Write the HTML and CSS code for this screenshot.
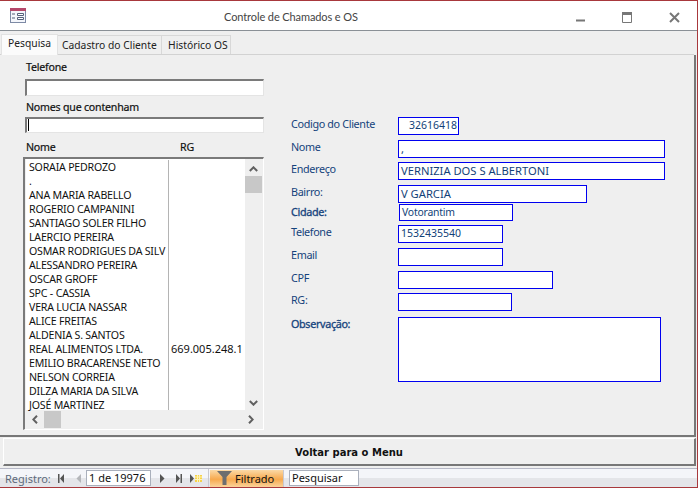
FILE: index.html
```html
<!DOCTYPE html>
<html lang="pt">
<head>
<meta charset="utf-8">
<title>Controle de Chamados e OS</title>
<link rel="stylesheet" href="styles.css">
</head>
<body>
<div class="window">
  <header class="titlebar">
    <svg class="app-icon" width="16" height="15" viewBox="0 0 16 15">
      <rect x="0.5" y="0.5" width="15" height="14" fill="#f4f6fb" stroke="#7d8aa5"/>
      <rect x="0" y="0" width="16" height="3" fill="#b5476a"/>
      <path d="M2 6h3M2 10h3" stroke="#55617a"/>
      <path d="M7.500 5.500h6v2h-6zM7.500 9.500h6v2h-6z" fill="#fff" stroke="#55617a"/>
    </svg>
    <div class="title">Controle de Chamados e OS</div>
    <div class="controls">
      <svg class="min-icon" width="10" height="3" viewBox="0 0 10 3"><rect width="9" height="2" y="0.500" fill="#777"/></svg>
      <svg width="11" height="11" viewBox="0 0 11 11"><path d="M.5 1.500h9v9h-9z" fill="none" stroke="#777"/><rect x="0" y="0" width="10" height="3" fill="#777"/></svg>
      <svg width="11" height="11" viewBox="0 0 11 11"><path d="M1 1l9 9M10 1l-9 9" stroke="#777" stroke-width="2"/></svg>
    </div>
  </header>

  <nav class="tabs">
    <div class="tab active">Pesquisa</div>
    <div class="tab tab-cad">Cadastro do Cliente</div>
    <div class="tab tab-hist">Histórico OS</div>
  </nav>

  <main class="page">
    <section class="search">
      <div class="s-label">Telefone</div>
      <div class="s-input tall"></div>
      <div class="s-label second">Nomes que contenham</div>
      <div class="s-input"><span class="caret"></span></div>
      <div class="list-head"><span class="col-name">Nome</span><span>RG</span></div>
      <div class="listbox">
        <div class="list-main">
          <div class="rows">
            <div class="row"><span class="c1">SORAIA PEDROZO</span><span class="c2"></span></div>
            <div class="row"><span class="c1">.</span><span class="c2"></span></div>
            <div class="row"><span class="c1">ANA MARIA RABELLO</span><span class="c2"></span></div>
            <div class="row"><span class="c1">ROGERIO CAMPANINI</span><span class="c2"></span></div>
            <div class="row"><span class="c1">SANTIAGO SOLER FILHO</span><span class="c2"></span></div>
            <div class="row"><span class="c1">LAERCIO PEREIRA</span><span class="c2"></span></div>
            <div class="row"><span class="c1">OSMAR RODRIGUES DA SILV</span><span class="c2"></span></div>
            <div class="row"><span class="c1">ALESSANDRO PEREIRA</span><span class="c2"></span></div>
            <div class="row"><span class="c1">OSCAR GROFF</span><span class="c2"></span></div>
            <div class="row"><span class="c1">SPC - CASSIA</span><span class="c2"></span></div>
            <div class="row"><span class="c1">VERA LUCIA NASSAR</span><span class="c2"></span></div>
            <div class="row"><span class="c1">ALICE FREITAS</span><span class="c2"></span></div>
            <div class="row"><span class="c1">ALDENIA S. SANTOS</span><span class="c2"></span></div>
            <div class="row"><span class="c1">REAL ALIMENTOS LTDA.</span><span class="c2">669.005.248.1</span></div>
            <div class="row"><span class="c1">EMILIO BRACARENSE NETO</span><span class="c2"></span></div>
            <div class="row"><span class="c1">NELSON CORREIA</span><span class="c2"></span></div>
            <div class="row"><span class="c1">DILZA MARIA DA SILVA</span><span class="c2"></span></div>
            <div class="row last"><span class="c1">JOSÉ MARTINEZ</span><span class="c2"></span></div>
          </div>
          <div class="vscroll">
            <svg width="9" height="6" viewBox="0 0 9 6"><path d="M.8 5L4.500 1.300 8.200 5" fill="none" stroke="#606060" stroke-width="2"/></svg>
            <div class="vthumb"></div>
            <svg class="down" width="9" height="6" viewBox="0 0 9 6"><path d="M.8 1L4.500 4.700 8.200 1" fill="none" stroke="#606060" stroke-width="2"/></svg>
          </div>
        </div>
        <div class="hscroll">
          <svg width="6" height="9" viewBox="0 0 6 9"><path d="M5 .8L1.300 4.500 5 8.200" fill="none" stroke="#606060" stroke-width="2"/></svg>
          <div class="hthumb"></div>
          <svg class="right" width="6" height="9" viewBox="0 0 6 9"><path d="M1 .8L4.700 4.500 1 8.200" fill="none" stroke="#606060" stroke-width="2"/></svg>
        </div>
      </div>
    </section>

    <section class="details">
      <label class="f-label">Codigo do Cliente</label><div class="f-input w-codigo num">32616418</div>
      <label class="f-label">Nome</label><div class="f-input w-full low">,</div>
      <label class="f-label">Endereço</label><div class="f-input w-full">VERNIZIA DOS S ALBERTONI</div>
      <label class="f-label">Bairro:</label><div class="f-input w-bairro">V GARCIA</div>
      <label class="f-label strong">Cidade:</label><div class="f-input w-cidade">Votorantim</div>
      <label class="f-label">Telefone</label><div class="f-input w-tel digits">1532435540</div>
      <label class="f-label">Email</label><div class="f-input w-tel"></div>
      <label class="f-label">CPF</label><div class="f-input w-cpf"></div>
      <label class="f-label">RG:</label><div class="f-input w-rg"></div>
      <label class="f-label strong obs-label">Observação:</label><div class="f-input w-obs"></div>
    </section>
  </main>

  <div class="menu-btn">Voltar para o Menu</div>

  <footer class="statusbar">
    <span class="reg">Registro:</span>
    <div class="nav-group">
      <svg width="6" height="9" viewBox="0 0 6 9"><path d="M0 0h1.500v9H0zM6 0v9L2 4.500z" fill="#555"/></svg>
      <svg class="nav-prev" width="5" height="9" viewBox="0 0 5 9"><path d="M5 0v9L.5 4.500z" fill="#b4b6ba"/></svg>
    </div>
    <div class="rec">1 de 19976</div>
    <div class="nav-group after">
      <svg width="5" height="9" viewBox="0 0 5 9"><path d="M0 0v9l4.500-4.500z" fill="#555"/></svg>
      <svg class="nav-last" width="6" height="9" viewBox="0 0 6 9"><path d="M0 0v9l4-4.500zM4.500 0H6v9H4.500z" fill="#555"/></svg>
      <svg class="nav-new" width="12" height="9" viewBox="0 0 12 9"><path d="M0 0v9l4-4.500z" fill="#555"/><rect x="5" y="1" width="7" height="7" fill="#f6d24a"/><path d="M5 3h7M5 5.500h7M7.500 1v7M9.500 1v7" stroke="#fff3b8"/></svg>
    </div>
    <div class="filter">
      <svg width="15" height="14" viewBox="0 0 15 14"><path d="M0 0h15L9.500 6v8h-4V6z" fill="#6e6e6e"/></svg>
      <span>Filtrado</span>
    </div>
    <div class="search-box">Pesquisar</div>
  </footer>
</div>
</body>
</html>
```
FILE: styles.css
```css
* { box-sizing: border-box; }
html, body { margin: 0; padding: 0; background: #fff; }
body { width: 700px; height: 491px; overflow: hidden; font-family: "Noto Sans", "Liberation Sans", sans-serif; }

.window {
  width: 698px;
  height: 488px;
  border-top: 1px solid #a8383c;
  border-right: 1px solid #a8383c;
  border-bottom: 1px solid #a8383c;
  background: #efefef;
  display: flex;
  flex-direction: column;
}

.titlebar {
  height: 30px;
  flex: none;
  background: #fff;
  border-bottom: 1px solid #8a9096;
  display: flex;
  align-items: center;
  padding: 0 0 0 10px;
  position: relative;
}
.app-icon { flex: none; }
.title {
  position: absolute;
  left: 224px;
  top: 8px;
  font-size: 11px;
  letter-spacing: -0.1px;
  line-height: 16px;
  color: #444;
  white-space: nowrap;
  font-family: "Lato", sans-serif;
}
.controls {
  margin-left: auto;
  margin-top: 3px;
  display: flex;
  align-items: center;
  gap: 36px;
  padding-right: 17px;
}
.min-icon { margin-top: 7px; }

.tabs {
  flex: none;
  height: 24px;
  display: flex;
  align-items: flex-end;
  padding: 3px 0 0 1px;
  border-bottom: 1px solid #d2d2d2;
  margin-right: 3px;
}
.tab {
  height: 19px;
  border: 1px solid #d8d8d8;
  border-bottom: none;
  border-left: none;
  font-size: 10.300px;
  line-height: 19px;
  color: #222;
  white-space: nowrap;
}
.tab-cad { width: 104px; padding-left: 4px; }
.tab-hist { width: 69px; padding-left: 6px; }
.tab.active {
  height: 21px;
  width: 57px;
  border: 1px solid #e2e2e2;
  border-bottom: none;
  background: #fbfbfb;
  padding: 0 0 0 6px;
  margin-bottom: -1px;
  position: relative;
  line-height: 17px;
}

.page {
  flex: none;
  height: 382px;
  display: flex;
  border-right: 2px solid #777;
  border-bottom: 2px solid #777;
  margin-right: 1px;
}

.search {
  width: 267px;
  padding: 5px 0 0 23px;
  color: #111;
}
.s-label {
  margin-left: 3px;
  height: 14px;
  line-height: 14px;
  font-size: 10.600px;
  letter-spacing: -0.2px;
  -webkit-text-stroke: 0.2px #111;
}
.s-label.second { margin-top: 4px; }
.s-input {
  margin: 3px 0 0 2px;
  width: 239px;
  height: 16px;
  background: #fff;
  border-top: 2px solid #7a7a7a;
  border-left: 2px solid #7a7a7a;
  border-right: 1px solid #e4e4e4;
  border-bottom: 1px solid #e4e4e4;
}
.s-input.tall { height: 17px; margin-top: 5px; }
.caret { display: block; width: 1px; height: 12px; background: #000; margin-left: 1px; }

.list-head {
  display: flex;
  margin: 7px 0 0 3px;
  height: 14px;
  line-height: 14px;
  font-size: 10.600px;
  letter-spacing: -0.2px;
  -webkit-text-stroke: 0.2px #111;
}
.col-name { width: 154px; }

.listbox {
  margin-top: 3px;
  width: 241px;
  height: 273px;
  border-top: 2px solid #7a7a7a;
  border-left: 2px solid #7a7a7a;
  border-right: 1px solid #fff;
  border-bottom: 1px solid #fff;
  display: flex;
  flex-direction: column;
}
.list-main { display: flex; height: 252px; flex: none; }
.rows { width: 219px; margin-left: 1px; padding-top: 1px; background: #fff; height: 251px; }
.row { display: flex; height: 14px; line-height: 14px; font-size: 10.600px; letter-spacing: -0.2px; color: #111; }
.row.last { height: 12px; }
.c1 { width: 143px; flex: none; padding-left: 3px; overflow: hidden; white-space: nowrap; border-right: 1px solid #b4b4b4; }
.row.last .c1 { overflow: visible; }
.c2 { padding-left: 2px; white-space: nowrap; overflow: hidden; font-size: 11px; letter-spacing: 0; }

.vscroll {
  width: 17px;
  display: flex;
  flex-direction: column;
  align-items: center;
  padding-top: 7px;
}
.vthumb { width: 17px; height: 17px; background: #c8c8c8; margin-top: 4px; }
.down { margin-top: auto; margin-bottom: 5px; }

.hscroll {
  height: 17px;
  display: flex;
  align-items: center;
  padding: 0 0 0 6px;
  width: 236px;
  margin-left: 1px;
}
.hthumb { width: 17px; height: 17px; background: #c8c8c8; margin-left: 6px; }
.right { margin-left: auto; margin-right: 8px; }

.details {
  margin: 62px 0 0 24px;
  display: grid;
  grid-template-columns: 107px auto;
  grid-template-rows: 23px 22px 23px 19px 21px 23px 23px 22px 24px 65px;
  justify-items: start;
  align-content: start;
}
.f-label { line-height: 14px; font-size: 10.800px; letter-spacing: -0.35px; color: #15437c; white-space: nowrap; }
.strong { -webkit-text-stroke: 0.3px #15437c; margin-top: 1px; }
.obs-label { margin-top: 0; }
.f-input {
  height: 18px;
  border: 1px solid #0000f0;
  background: #fff;
  padding-left: 2px;
  line-height: 15px;
  font-size: 11.200px;
  color: #123f78;
  white-space: nowrap;
}
.num { text-align: right; padding: 0 1px 0 0; font-size: 10.500px; }
.digits { font-size: 10.500px; }
.low { line-height: 16px; }
.w-codigo { width: 61px; }
.w-full { width: 267px; }
.w-bairro { width: 189px; }
.w-cidade { width: 114px; height: 17px; margin-left: 1px; font-size: 10.400px; letter-spacing: -0.2px; }
.w-tel { width: 105px; }
.w-cpf { width: 155px; }
.w-rg { width: 114px; }
.w-obs { width: 263px; height: 65px; }

.menu-btn {
  flex: none;
  height: 28px;
  margin: 1px 1px 0 3px;
  background: #efefef;
  border-top: 1px solid #fff;
  border-left: 1px solid #fff;
  border-right: 2px solid #777;
  border-bottom: 2px solid #777;
  text-align: center;
  font-size: 10px;
  font-weight: 700;
  line-height: 27px;
  color: #111;
  font-family: "DejaVu Sans", sans-serif;
}

.statusbar {
  flex: 1;
  margin-top: 2px;
  border-top: 1px solid #b6b8c6;
  background: linear-gradient(#f4f5f9 0, #f4f5f9 50%, #e4e5e9 50%, #e4e5e9 100%);
  display: flex;
  align-items: center;
  padding-left: 5px;
  font-size: 11px;
}
.reg { color: #5f6b7c; width: 53px; flex: none; }
.nav-group { display: flex; align-items: center; width: 28px; flex: none; }
.nav-prev { margin-left: 12px; }
.rec {
  width: 65px;
  height: 16px;
  background: #fff;
  border: 1px solid #aab0bc;
  line-height: 14px;
  padding-left: 2px;
  color: #111;
  white-space: nowrap;
}
.nav-group.after {
  width: 58px;
  height: 100%;
  padding-left: 9px;
  border-right: 1px solid #c8c8d0;
}
.nav-last { margin-left: 11px; }
.nav-new { margin-left: 8px; }
.filter {
  width: 74px;
  height: 17px;
  margin-left: 1px;
  background: linear-gradient(#fbd9a6, #f7a94e 55%, #fbd39a);
  border-right: 1px solid #c8c8d0;
  display: flex;
  align-items: center;
  gap: 3px;
  padding-left: 7px;
  color: #111;
}
.search-box {
  margin-left: 5px;
  width: 70px;
  height: 16px;
  background: #fff;
  border: 1px solid #aab0bc;
  line-height: 14px;
  padding-left: 2px;
  color: #111;
}
```
